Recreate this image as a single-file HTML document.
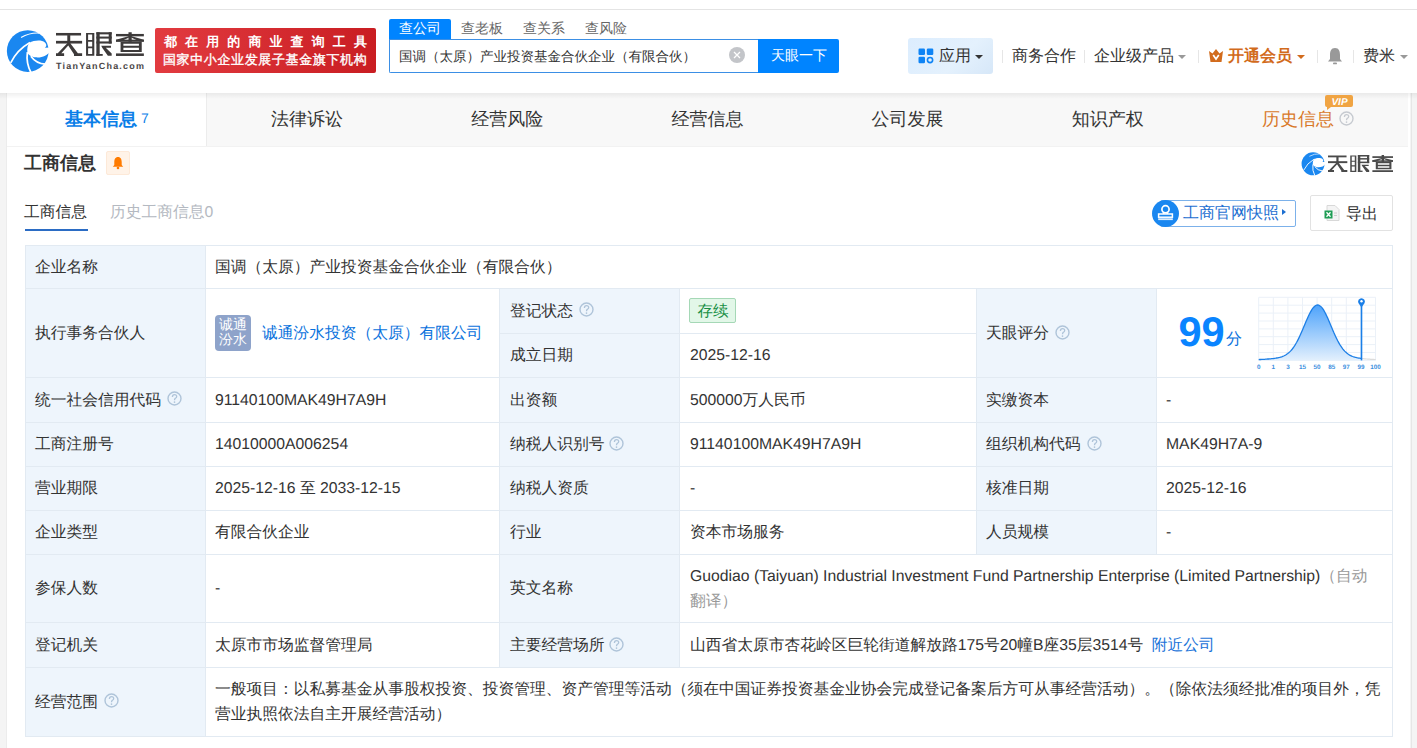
<!DOCTYPE html>
<html><head><meta charset="utf-8">
<style>
*{box-sizing:border-box;margin:0;padding:0}
html,body{width:1417px;height:748px;overflow:hidden;background:#fff}
body{font-family:"Liberation Sans",sans-serif;color:#333;position:relative;text-rendering:geometricPrecision}
.a{position:absolute;white-space:nowrap}
.t{position:absolute;white-space:nowrap;font-size:15.75px;line-height:20px;color:#333}
.hl{position:absolute;height:1px;background:#e2eaf2}
.vl{position:absolute;width:1px;background:#e2eaf2}
.lab{position:absolute;background:#eef5fc}
.caret{position:absolute;width:0;height:0;border-left:4px solid transparent;border-right:4px solid transparent;border-top:4px solid #999}
.sep{position:absolute;width:1px;height:13px;background:#e6e6e6}
</style></head><body>

<div class="a" style="left:0;top:9px;width:1417px;height:1px;background:#e4e4e4"></div>
<div class="a" style="left:0;top:93px;width:1417px;height:655px;background:#f4f4f4"></div>
<div class="a" style="left:7px;top:93px;width:1403px;height:655px;background:#fff"></div>
<div class="a" style="left:1411px;top:93px;width:1px;height:655px;background:#e6e6e6"></div>
<div class="a" style="left:6px;top:93px;width:1px;height:655px;background:#ececec"></div>
<svg class="a" style="left:4.0px;top:26.0px" width="50.0" height="50.0" viewBox="0 0 748 748">
<circle cx="355" cy="375" r="312" fill="#1a87f0"/>
<path d="M380,250 C450,212 560,200 612,245 C645,280 635,305 612,325 L700,322 L700,365 C650,445 565,478 470,468 C415,462 362,432 350,395 C343,330 355,285 380,250 Z" fill="#fff"/>
<path d="M100,552 Q190,360 388,246" fill="none" stroke="#fff" stroke-width="24"/>
<path d="M255,172 Q390,95 530,106" fill="none" stroke="#fff" stroke-width="18"/>
<path d="M350,392 Q328,560 405,700" fill="none" stroke="#fff" stroke-width="26"/>
<path d="M402,452 Q480,560 618,572" fill="none" stroke="#fff" stroke-width="26"/>
</svg>
<svg class="a" style="left:50px;top:28px" width="100" height="44" viewBox="0 0 1417 623"><g fill="#3d3a3a">
<rect x="85" y="70" width="355" height="36"/>
<rect x="85" y="182" width="370" height="38"/>
<rect x="245" y="100" width="42" height="125"/>
<path d="M245,215 L287,215 L160,358 L200,358 L200,395 L85,395 L85,358 L110,358 Z"/>
<path d="M245,225 L287,215 L395,358 L455,358 L455,395 L340,395 L340,370 Z"/>
<path d="M511,71 L628,71 L628,394 L511,394 Z M540,92 L598,92 L598,171 L540,171 Z M540,193 L598,193 L598,262 L540,262 Z M540,288 L598,288 L598,368 L540,368 Z" fill-rule="evenodd"/>
<rect x="657" y="60" width="47" height="334"/>
<rect x="657" y="60" width="217" height="30"/>
<rect x="832" y="60" width="42" height="160"/>
<rect x="657" y="121" width="217" height="29"/>
<rect x="657" y="190" width="217" height="30"/>
<path d="M726,251 L864,251 L864,278 L790,278 L874,360 L874,394 L820,394 L740,278 Z"/>
<rect x="657" y="368" width="90" height="26"/>
<rect x="935" y="84" width="395" height="34"/>
<rect x="1112" y="60" width="46" height="135"/>
<path d="M1112,118 L1158,118 L1000,192 L935,192 L935,165 Z"/>
<path d="M1158,118 L1112,118 L1270,192 L1330,192 L1330,165 Z"/>
<rect x="935" y="165" width="395" height="30"/>
<path d="M1000,195 L1300,195 L1300,340 L1000,340 Z M1040,222 L1260,222 L1260,252 L1040,252 Z M1040,280 L1260,280 L1260,310 L1040,310 Z" fill-rule="evenodd"/>
<rect x="935" y="360" width="395" height="36"/>
</g></svg>
<div class="a" style="left:56px;top:61px;font-size:9px;line-height:10px;font-weight:bold;color:#4a4646;letter-spacing:1.2px">TianYanCha.com</div>
<div class="a" style="left:155px;top:28px;width:221px;height:45px;border-radius:2px;background:linear-gradient(90deg,#e23b40,#c91d22)"></div>
<div class="a" style="left:164px;top:33px;font-size:13px;line-height:18px;color:#fff;font-weight:bold;letter-spacing:8.1px">都在用的商业查询工具</div>
<div class="a" style="left:163px;top:51px;font-size:13px;line-height:18px;color:#fff;letter-spacing:0.62px;-webkit-text-stroke:0.35px #fff">国家中小企业发展子基金旗下机构</div>
<div class="a" style="left:389px;top:19px;width:62px;height:20px;background:#0084ff;border-radius:2px 2px 0 0"></div>
<div class="a" style="left:399px;top:18px;font-size:14px;line-height:20px;color:#fff">查公司</div>
<div class="a" style="left:461px;top:18px;font-size:14px;line-height:20px;color:#666">查老板</div>
<div class="a" style="left:523px;top:18px;font-size:14px;line-height:20px;color:#666">查关系</div>
<div class="a" style="left:585px;top:18px;font-size:14px;line-height:20px;color:#666">查风险</div>
<div class="a" style="left:389px;top:39px;width:370px;height:34px;border:1px solid #3b8fe5;border-right:none;border-radius:0 0 0 2px;background:#fff"></div>
<div class="a" style="left:399px;top:47px;font-size:13.5px;line-height:20px;color:#333">国调（太原）产业投资基金合伙企业（有限合伙）</div>
<svg class="a" style="left:728.5px;top:47px" width="16" height="16" viewBox="0 0 16 16"><circle cx="8" cy="8" r="8" fill="#c3c5c9"/><path d="M5,5 L11,11 M11,5 L5,11" stroke="#fff" stroke-width="1.3"/></svg>
<div class="a" style="left:758px;top:39px;width:81px;height:34px;background:#0084ff;border-radius:0 2px 2px 0"></div>
<div class="a" style="left:771px;top:45px;font-size:14px;line-height:20px;color:#fff">天眼一下</div>
<div class="a" style="left:908px;top:38px;width:85px;height:36px;border-radius:3px;background:linear-gradient(135deg,#dcedfe,#e4f1fd 60%,#d6e7f8)"></div>
<svg class="a" style="left:918px;top:48px" width="16" height="16" viewBox="0 0 16 16"><rect x="0.5" y="0.5" width="6.5" height="6.5" rx="1.2" fill="#0f84f5"/><rect x="8.8" y="0.5" width="6.5" height="6.5" rx="1.2" fill="#0f84f5"/><rect x="0.5" y="8.8" width="6.5" height="6.5" rx="1.2" fill="#0f84f5"/><circle cx="12.05" cy="12.05" r="2.6" fill="none" stroke="#0f84f5" stroke-width="1.6"/></svg>
<div class="a" style="left:939px;top:47px;font-size:16px;line-height:20px;color:#333">应用</div>
<div class="caret" style="left:975px;top:55px;border-top-color:#333"></div>
<div class="sep" style="left:1002px;top:50px"></div>
<div class="a" style="left:1012px;top:47px;font-size:16px;line-height:20px;color:#333">商务合作</div>
<div class="sep" style="left:1084px;top:50px"></div>
<div class="a" style="left:1094px;top:47px;font-size:16px;line-height:20px;color:#333">企业级产品</div>
<div class="caret" style="left:1178px;top:55px"></div>
<div class="sep" style="left:1198px;top:50px"></div>
<svg class="a" style="left:1208px;top:48px" width="16" height="15" viewBox="0 0 16 15"><path d="M1,3 L4.5,5.5 L8,1 L11.5,5.5 L15,3 L13.5,14 L2.5,14 Z" fill="#d26b1c"/><path d="M5.2,7 L8,11 L10.8,7" fill="none" stroke="#fff" stroke-width="1.7"/></svg>
<div class="a" style="left:1228px;top:47px;font-size:16px;line-height:20px;color:#d26b1c;font-weight:bold">开通会员</div>
<div class="caret" style="left:1297px;top:55px;border-top-color:#d26b1c"></div>
<div class="sep" style="left:1317px;top:50px"></div>
<svg class="a" style="left:1327px;top:47px" width="16" height="18" viewBox="0 0 16 18"><path d="M8,1 C4,1 3,4.5 3,8 L3,12 L1,14.5 L15,14.5 L13,12 L13,8 C13,4.5 12,1 8,1 Z" fill="#999"/><rect x="6" y="15.5" width="4" height="1.8" rx="0.9" fill="#999"/></svg>
<div class="sep" style="left:1353px;top:50px"></div>
<div class="a" style="left:1363px;top:47px;font-size:16px;line-height:20px;color:#333">费米</div>
<div class="caret" style="left:1400px;top:55px"></div>
<div class="a" style="left:206px;top:93px;width:1202px;height:53px;background:#f8f8f8"></div>
<div class="a" style="left:206px;top:93px;width:1px;height:53px;background:#ececec"></div>
<div class="a" style="left:7px;top:146px;width:1401px;height:1px;background:#f2f2f2"></div>
<div class="a" style="left:0;top:93px;width:1417px;height:6px;background:linear-gradient(rgba(0,0,0,0.06),rgba(0,0,0,0))"></div>
<div class="a" style="left:65px;top:108px;font-size:18px;line-height:22px;color:#0a7ee8;font-weight:bold">基本信息</div>
<div class="a" style="left:141px;top:109px;font-size:14px;line-height:18px;color:#0a7ee8">7</div>
<div class="a" style="left:271.0px;top:108px;font-size:18px;line-height:22px;color:#333">法律诉讼</div>
<div class="a" style="left:471.2px;top:108px;font-size:18px;line-height:22px;color:#333">经营风险</div>
<div class="a" style="left:671.4px;top:108px;font-size:18px;line-height:22px;color:#333">经营信息</div>
<div class="a" style="left:871.6px;top:108px;font-size:18px;line-height:22px;color:#333">公司发展</div>
<div class="a" style="left:1071.8px;top:108px;font-size:18px;line-height:22px;color:#333">知识产权</div>
<div class="a" style="left:1262px;top:108px;font-size:18px;line-height:22px;color:#d9782a">历史信息</div>
<svg class="a" style="left:1339.0px;top:110.5px" width="15" height="15" viewBox="0 0 15 15"><circle cx="7.5" cy="7.5" r="6.5" fill="none" stroke="#c6cad0" stroke-width="1.4"/><path d="M5.4,5.9 C5.4,4.3 6.3,3.6 7.5,3.6 C8.8,3.6 9.7,4.4 9.7,5.5 C9.7,6.6 8.9,7 8.3,7.4 C7.7,7.8 7.5,8.2 7.5,9.2" fill="none" stroke="#c6cad0" stroke-width="1.3"/><circle cx="7.5" cy="11.1" r="0.85" fill="#c6cad0"/></svg>
<svg class="a" style="left:1325px;top:95px" width="28" height="16" viewBox="0 0 28 16"><path d="M2,0 L26,0 Q28,0 28,2 L28,10 Q28,12 26,12 L6,12 L2,15 L2,12 Q0,12 0,10 L0,2 Q0,0 2,0 Z" fill="#f0a443"/><text x="14.5" y="10" text-anchor="middle" font-family="Liberation Sans" font-size="10" font-weight="bold" font-style="italic" fill="#fff">VIP</text></svg>
<div class="a" style="left:24px;top:152px;font-size:18px;line-height:22px;font-weight:bold;color:#333">工商信息</div>
<div class="a" style="left:106px;top:151px;width:24px;height:24px;border-radius:2px;background:#fff3e8;border:1px solid #fde9d8"></div>
<svg class="a" style="left:111px;top:156px" width="14" height="14" viewBox="0 0 14 14"><path d="M7,1 C4.2,1 3.3,3.5 3.3,6 L3.3,9 L1.8,10.8 L12.2,10.8 L10.7,9 L10.7,6 C10.7,3.5 9.8,1 7,1 Z" fill="#ff7b00"/><circle cx="7" cy="12" r="1.3" fill="#ff7b00"/></svg>
<svg class="a" style="left:1300.0px;top:149.5px" width="27.5" height="27.5" viewBox="0 0 748 748">
<circle cx="355" cy="375" r="312" fill="#1a87f0"/>
<path d="M380,250 C450,212 560,200 612,245 C645,280 635,305 612,325 L700,322 L700,365 C650,445 565,478 470,468 C415,462 362,432 350,395 C343,330 355,285 380,250 Z" fill="#fff"/>
<path d="M100,552 Q190,360 388,246" fill="none" stroke="#fff" stroke-width="24"/>
<path d="M255,172 Q390,95 530,106" fill="none" stroke="#fff" stroke-width="18"/>
<path d="M350,392 Q328,560 405,700" fill="none" stroke="#fff" stroke-width="26"/>
<path d="M402,452 Q480,560 618,572" fill="none" stroke="#fff" stroke-width="26"/>
</svg>
<svg class="a" style="left:1328px;top:155px" width="65" height="17" viewBox="85 60 1245 335" preserveAspectRatio="none"><g fill="#4a4a4a">
<rect x="85" y="70" width="355" height="36"/>
<rect x="85" y="182" width="370" height="38"/>
<rect x="245" y="100" width="42" height="125"/>
<path d="M245,215 L287,215 L160,358 L200,358 L200,395 L85,395 L85,358 L110,358 Z"/>
<path d="M245,225 L287,215 L395,358 L455,358 L455,395 L340,395 L340,370 Z"/>
<path d="M511,71 L628,71 L628,394 L511,394 Z M540,92 L598,92 L598,171 L540,171 Z M540,193 L598,193 L598,262 L540,262 Z M540,288 L598,288 L598,368 L540,368 Z" fill-rule="evenodd"/>
<rect x="657" y="60" width="47" height="334"/>
<rect x="657" y="60" width="217" height="30"/>
<rect x="832" y="60" width="42" height="160"/>
<rect x="657" y="121" width="217" height="29"/>
<rect x="657" y="190" width="217" height="30"/>
<path d="M726,251 L864,251 L864,278 L790,278 L874,360 L874,394 L820,394 L740,278 Z"/>
<rect x="657" y="368" width="90" height="26"/>
<rect x="935" y="84" width="395" height="34"/>
<rect x="1112" y="60" width="46" height="135"/>
<path d="M1112,118 L1158,118 L1000,192 L935,192 L935,165 Z"/>
<path d="M1158,118 L1112,118 L1270,192 L1330,192 L1330,165 Z"/>
<rect x="935" y="165" width="395" height="30"/>
<path d="M1000,195 L1300,195 L1300,340 L1000,340 Z M1040,222 L1260,222 L1260,252 L1040,252 Z M1040,280 L1260,280 L1260,310 L1040,310 Z" fill-rule="evenodd"/>
<rect x="935" y="360" width="395" height="36"/>
</g></svg>
<div class="a" style="left:24px;top:203px;font-size:15.75px;line-height:20px;color:#333">工商信息</div>
<div class="a" style="left:25px;top:229px;width:63px;height:2px;background:#2b6cc4"></div>
<div class="a" style="left:110px;top:203px;font-size:15.75px;line-height:20px;color:#b4b9c1">历史工商信息0</div>
<div class="a" style="left:1160px;top:200px;width:136px;height:27px;border:1px solid #7cb1ea;border-radius:2px"></div>
<svg class="a" style="left:1152px;top:200px" width="27" height="27" viewBox="0 0 27 27"><circle cx="13.5" cy="13.5" r="13.5" fill="#1a87f0"/><circle cx="13.5" cy="9.3" r="3.6" fill="none" stroke="#fff" stroke-width="1.7"/><path d="M11.6,12.3 L11.6,14 M15.4,12.3 L15.4,14" stroke="#fff" stroke-width="1.5"/><rect x="6.6" y="14" width="13.8" height="3.2" fill="none" stroke="#fff" stroke-width="1.5"/><rect x="6.2" y="18.3" width="14.6" height="1.8" fill="#fff" opacity="0.85"/></svg>
<div class="a" style="left:1183px;top:204px;font-size:16px;line-height:20px;color:#1d6fd1">工商官网快照</div>
<div class="a" style="left:1282px;top:209px;width:0;height:0;border-top:3.5px solid transparent;border-bottom:3.5px solid transparent;border-left:4px solid #1d6fd1"></div>
<div class="a" style="left:1310px;top:195px;width:83px;height:36px;border:1px solid #e2e2e2;border-radius:2px"></div>
<svg class="a" style="left:1324px;top:205px" width="16" height="16" viewBox="0 0 16 16"><path d="M3,0.5 L11,0.5 L15,4.5 L15,15.5 L3,15.5 Z" fill="#f4f4f4" stroke="#d8d8d8"/><path d="M10,8 L13,8 M10,10.5 L13,10.5" stroke="#ccc"/><rect x="0.5" y="5.5" width="8" height="8" fill="#1f9d55"/><path d="M2.5,7.3 L6.5,11.7 M6.5,7.3 L2.5,11.7" stroke="#fff" stroke-width="1.3"/></svg>
<div class="a" style="left:1346px;top:205px;font-size:16px;line-height:20px;color:#333">导出</div>
<div class="lab" style="left:25px;top:245px;width:180px;height:491px"></div>
<div class="lab" style="left:499px;top:288px;width:180px;height:379px"></div>
<div class="lab" style="left:976px;top:288px;width:180px;height:266px"></div>
<div class="hl" style="left:25px;top:245px;width:1368px"></div>
<div class="hl" style="left:25px;top:288px;width:1368px"></div>
<div class="hl" style="left:499px;top:333px;width:478px"></div>
<div class="hl" style="left:25px;top:377px;width:1368px"></div>
<div class="hl" style="left:25px;top:422px;width:1368px"></div>
<div class="hl" style="left:25px;top:466px;width:1368px"></div>
<div class="hl" style="left:25px;top:510px;width:1368px"></div>
<div class="hl" style="left:25px;top:554px;width:1368px"></div>
<div class="hl" style="left:25px;top:622px;width:1368px"></div>
<div class="hl" style="left:25px;top:667px;width:1368px"></div>
<div class="hl" style="left:25px;top:736px;width:1368px"></div>
<div class="vl" style="left:25px;top:245px;height:492px"></div>
<div class="vl" style="left:1392px;top:245px;height:492px"></div>
<div class="vl" style="left:205px;top:245px;height:492px"></div>
<div class="vl" style="left:499px;top:288px;height:380px"></div>
<div class="vl" style="left:679px;top:288px;height:380px"></div>
<div class="vl" style="left:976px;top:288px;height:267px"></div>
<div class="vl" style="left:1156px;top:288px;height:267px"></div>
<div class="t" style="left:35.0px;top:257.5px;">企业名称</div>
<div class="t" style="left:215.0px;top:257.5px;">国调（太原）产业投资基金合伙企业（有限合伙）</div>
<div class="t" style="left:35.0px;top:323.5px;">执行事务合伙人</div>
<div class="a" style="left:215px;top:315px;width:36px;height:36px;border-radius:4px;background:#8ea3ca"></div>
<div class="a" style="left:219px;top:316.5px;font-size:14px;line-height:15px;color:#fff">诚通<br>汾水</div>
<div class="t" style="left:262.0px;top:323.5px;color:#0a72dd">诚通汾水投资（太原）有限公司</div>
<div class="t" style="left:510.0px;top:301.5px;">登记状态</div>
<svg class="a" style="left:578.5px;top:302.0px" width="15" height="15" viewBox="0 0 15 15"><circle cx="7.5" cy="7.5" r="6.5" fill="none" stroke="#afc4d9" stroke-width="1.4"/><path d="M5.4,5.9 C5.4,4.3 6.3,3.6 7.5,3.6 C8.8,3.6 9.7,4.4 9.7,5.5 C9.7,6.6 8.9,7 8.3,7.4 C7.7,7.8 7.5,8.2 7.5,9.2" fill="none" stroke="#afc4d9" stroke-width="1.3"/><circle cx="7.5" cy="11.1" r="0.85" fill="#afc4d9"/></svg>
<div class="a" style="left:689px;top:298px;width:47px;height:25px;border:1px solid #a5d8b6;background:#e2f7e8;border-radius:2px"></div>
<div class="a" style="left:697.5px;top:301.5px;font-size:15.5px;line-height:20px;color:#178f45">存续</div>
<div class="t" style="left:510.0px;top:346.0px;">成立日期</div>
<div class="t" style="left:690.0px;top:346.0px;">2025-12-16</div>
<div class="t" style="left:986.0px;top:323.5px;">天眼评分</div>
<svg class="a" style="left:1055.0px;top:324.5px" width="15" height="15" viewBox="0 0 15 15"><circle cx="7.5" cy="7.5" r="6.5" fill="none" stroke="#afc4d9" stroke-width="1.4"/><path d="M5.4,5.9 C5.4,4.3 6.3,3.6 7.5,3.6 C8.8,3.6 9.7,4.4 9.7,5.5 C9.7,6.6 8.9,7 8.3,7.4 C7.7,7.8 7.5,8.2 7.5,9.2" fill="none" stroke="#afc4d9" stroke-width="1.3"/><circle cx="7.5" cy="11.1" r="0.85" fill="#afc4d9"/></svg>
<div class="a" style="left:1178.5px;top:306.5px;font-size:41.5px;line-height:50px;font-weight:bold;color:#0a84ff">99</div>
<div class="a" style="left:1226px;top:330px;font-size:16px;line-height:20px;color:#0a72dd">分</div>
<svg class="a" style="left:1255px;top:292px" width="132" height="80" viewBox="0 0 132 80">
<defs><linearGradient id="cg" x1="0" y1="0" x2="0" y2="1"><stop offset="0" stop-color="#4ea3fb"/><stop offset="1" stop-color="#e3f0fd"/></linearGradient></defs>
<line x1="3.7" y1="5.3" x2="3.7" y2="68.4" stroke="#ebf1f8" stroke-width="1"/><line x1="18.3" y1="5.3" x2="18.3" y2="68.4" stroke="#ebf1f8" stroke-width="1"/><line x1="32.9" y1="5.3" x2="32.9" y2="68.4" stroke="#ebf1f8" stroke-width="1"/><line x1="47.5" y1="5.3" x2="47.5" y2="68.4" stroke="#ebf1f8" stroke-width="1"/><line x1="62.1" y1="5.3" x2="62.1" y2="68.4" stroke="#ebf1f8" stroke-width="1"/><line x1="76.7" y1="5.3" x2="76.7" y2="68.4" stroke="#ebf1f8" stroke-width="1"/><line x1="91.3" y1="5.3" x2="91.3" y2="68.4" stroke="#ebf1f8" stroke-width="1"/><line x1="105.9" y1="5.3" x2="105.9" y2="68.4" stroke="#ebf1f8" stroke-width="1"/><line x1="120.5" y1="5.3" x2="120.5" y2="68.4" stroke="#ebf1f8" stroke-width="1"/><line x1="3.7" y1="5.3" x2="120.7" y2="5.3" stroke="#ebf1f8" stroke-width="1"/><line x1="3.7" y1="13.2" x2="120.7" y2="13.2" stroke="#ebf1f8" stroke-width="1"/><line x1="3.7" y1="21.1" x2="120.7" y2="21.1" stroke="#ebf1f8" stroke-width="1"/><line x1="3.7" y1="29.0" x2="120.7" y2="29.0" stroke="#ebf1f8" stroke-width="1"/><line x1="3.7" y1="36.9" x2="120.7" y2="36.9" stroke="#ebf1f8" stroke-width="1"/><line x1="3.7" y1="44.7" x2="120.7" y2="44.7" stroke="#ebf1f8" stroke-width="1"/><line x1="3.7" y1="52.6" x2="120.7" y2="52.6" stroke="#ebf1f8" stroke-width="1"/><line x1="3.7" y1="60.5" x2="120.7" y2="60.5" stroke="#ebf1f8" stroke-width="1"/><line x1="3.7" y1="68.4" x2="120.7" y2="68.4" stroke="#ebf1f8" stroke-width="1"/>
<path d="M3.7,68.4 L3.7,67.6 4.7,67.5 5.7,67.5 6.7,67.4 7.7,67.4 8.7,67.3 9.7,67.3 10.7,67.2 11.7,67.1 12.7,67.0 13.7,67.0 14.7,66.9 15.7,66.8 16.7,66.7 17.7,66.6 18.7,66.5 19.7,66.3 20.7,66.2 21.7,66.0 22.7,65.8 23.7,65.6 24.7,65.4 25.7,65.1 26.7,64.8 27.7,64.4 28.7,64.0 29.7,63.5 30.7,63.0 31.7,62.3 32.7,61.6 33.7,60.8 34.7,59.9 35.7,58.9 36.7,57.8 37.7,56.5 38.7,55.2 39.7,53.7 40.7,52.0 41.7,50.3 42.7,48.4 43.7,46.4 44.7,44.3 45.7,42.1 46.7,39.8 47.7,37.5 48.7,35.1 49.7,32.7 50.7,30.3 51.7,28.0 52.7,25.7 53.7,23.5 54.7,21.5 55.7,19.6 56.7,17.9 57.7,16.4 58.7,15.2 59.7,14.2 60.7,13.5 61.7,13.1 62.7,13.0 63.7,13.2 64.7,13.7 65.7,14.4 66.7,15.4 67.7,16.7 68.7,18.2 69.7,20.0 70.7,21.9 71.7,24.0 72.7,26.1 73.7,28.4 74.7,30.8 75.7,33.2 76.7,35.6 77.7,37.9 78.7,40.3 79.7,42.5 80.7,44.7 81.7,46.8 82.7,48.8 83.7,50.6 84.7,52.4 85.7,54.0 86.7,55.4 87.7,56.8 88.7,58.0 89.7,59.1 90.7,60.1 91.7,61.0 92.7,61.8 93.7,62.5 94.7,63.1 95.7,63.6 96.7,64.1 97.7,64.5 98.7,64.8 99.7,65.2 100.7,65.4 101.7,65.7 102.7,65.9 103.7,66.1 104.7,66.2 105.7,66.4 106.7,66.5 L106.7,68.4 Z" fill="url(#cg)"/>
<polyline points="3.7,67.6 4.7,67.5 5.7,67.5 6.7,67.4 7.7,67.4 8.7,67.3 9.7,67.3 10.7,67.2 11.7,67.1 12.7,67.0 13.7,67.0 14.7,66.9 15.7,66.8 16.7,66.7 17.7,66.6 18.7,66.5 19.7,66.3 20.7,66.2 21.7,66.0 22.7,65.8 23.7,65.6 24.7,65.4 25.7,65.1 26.7,64.8 27.7,64.4 28.7,64.0 29.7,63.5 30.7,63.0 31.7,62.3 32.7,61.6 33.7,60.8 34.7,59.9 35.7,58.9 36.7,57.8 37.7,56.5 38.7,55.2 39.7,53.7 40.7,52.0 41.7,50.3 42.7,48.4 43.7,46.4 44.7,44.3 45.7,42.1 46.7,39.8 47.7,37.5 48.7,35.1 49.7,32.7 50.7,30.3 51.7,28.0 52.7,25.7 53.7,23.5 54.7,21.5 55.7,19.6 56.7,17.9 57.7,16.4 58.7,15.2 59.7,14.2 60.7,13.5 61.7,13.1 62.7,13.0 63.7,13.2 64.7,13.7 65.7,14.4 66.7,15.4 67.7,16.7 68.7,18.2 69.7,20.0 70.7,21.9 71.7,24.0 72.7,26.1 73.7,28.4 74.7,30.8 75.7,33.2 76.7,35.6 77.7,37.9 78.7,40.3 79.7,42.5 80.7,44.7 81.7,46.8 82.7,48.8 83.7,50.6 84.7,52.4 85.7,54.0 86.7,55.4 87.7,56.8 88.7,58.0 89.7,59.1 90.7,60.1 91.7,61.0 92.7,61.8 93.7,62.5 94.7,63.1 95.7,63.6 96.7,64.1 97.7,64.5 98.7,64.8 99.7,65.2 100.7,65.4 101.7,65.7 102.7,65.9 103.7,66.1 104.7,66.2 105.7,66.4 106.7,66.5" fill="none" stroke="#1d7fe6" stroke-width="1.3"/>
<polyline points="106.7,66.5 107.7,66.6 108.7,66.7 109.7,66.8 110.7,66.9 111.7,67.0 112.7,67.1 113.7,67.1 114.7,67.2 115.7,67.3 116.7,67.3 117.7,67.4 118.7,67.4 119.7,67.5 120.7,67.5" fill="none" stroke="#dcdcdc" stroke-width="1.2"/>
<line x1="106.5" y1="12" x2="106.5" y2="68.4" stroke="#1a7fe8" stroke-width="1.6"/>
<path d="M106.5,15.5 L103.4,11 A3.4,3.4 0 1 1 109.6,11 Z" fill="#1a7fe8"/>
<circle cx="106.5" cy="9.2" r="1.2" fill="#fff"/>
<g font-family="Liberation Sans" font-size="6.3" fill="#3d8fe0" font-weight="bold"><text x="3.7" y="76.6" text-anchor="middle">0</text><text x="18.3" y="76.6" text-anchor="middle">1</text><text x="32.9" y="76.6" text-anchor="middle">3</text><text x="47.5" y="76.6" text-anchor="middle">15</text><text x="62.1" y="76.6" text-anchor="middle">50</text><text x="76.7" y="76.6" text-anchor="middle">85</text><text x="91.3" y="76.6" text-anchor="middle">97</text><text x="105.9" y="76.6" text-anchor="middle">99</text><text x="120.5" y="76.6" text-anchor="middle">100</text></g>
</svg>
<div class="t" style="left:35.0px;top:390.5px;">统一社会信用代码</div>
<svg class="a" style="left:166.5px;top:391.0px" width="15" height="15" viewBox="0 0 15 15"><circle cx="7.5" cy="7.5" r="6.5" fill="none" stroke="#afc4d9" stroke-width="1.4"/><path d="M5.4,5.9 C5.4,4.3 6.3,3.6 7.5,3.6 C8.8,3.6 9.7,4.4 9.7,5.5 C9.7,6.6 8.9,7 8.3,7.4 C7.7,7.8 7.5,8.2 7.5,9.2" fill="none" stroke="#afc4d9" stroke-width="1.3"/><circle cx="7.5" cy="11.1" r="0.85" fill="#afc4d9"/></svg>
<div class="t" style="left:215.0px;top:390.5px;">91140100MAK49H7A9H</div>
<div class="t" style="left:510.0px;top:390.5px;">出资额</div>
<div class="t" style="left:690.0px;top:390.5px;">500000万人民币</div>
<div class="t" style="left:986.0px;top:390.5px;">实缴资本</div>
<div class="t" style="left:1166.0px;top:390.5px;">-</div>
<div class="t" style="left:35.0px;top:435.0px;">工商注册号</div>
<div class="t" style="left:215.0px;top:435.0px;">14010000A006254</div>
<div class="t" style="left:510.0px;top:435.0px;">纳税人识别号</div>
<svg class="a" style="left:609.0px;top:436.0px" width="15" height="15" viewBox="0 0 15 15"><circle cx="7.5" cy="7.5" r="6.5" fill="none" stroke="#afc4d9" stroke-width="1.4"/><path d="M5.4,5.9 C5.4,4.3 6.3,3.6 7.5,3.6 C8.8,3.6 9.7,4.4 9.7,5.5 C9.7,6.6 8.9,7 8.3,7.4 C7.7,7.8 7.5,8.2 7.5,9.2" fill="none" stroke="#afc4d9" stroke-width="1.3"/><circle cx="7.5" cy="11.1" r="0.85" fill="#afc4d9"/></svg>
<div class="t" style="left:690.0px;top:435.0px;">91140100MAK49H7A9H</div>
<div class="t" style="left:986.0px;top:435.0px;">组织机构代码</div>
<svg class="a" style="left:1087.0px;top:436.0px" width="15" height="15" viewBox="0 0 15 15"><circle cx="7.5" cy="7.5" r="6.5" fill="none" stroke="#afc4d9" stroke-width="1.4"/><path d="M5.4,5.9 C5.4,4.3 6.3,3.6 7.5,3.6 C8.8,3.6 9.7,4.4 9.7,5.5 C9.7,6.6 8.9,7 8.3,7.4 C7.7,7.8 7.5,8.2 7.5,9.2" fill="none" stroke="#afc4d9" stroke-width="1.3"/><circle cx="7.5" cy="11.1" r="0.85" fill="#afc4d9"/></svg>
<div class="t" style="left:1166.0px;top:435.0px;">MAK49H7A-9</div>
<div class="t" style="left:35.0px;top:479.0px;">营业期限</div>
<div class="t" style="left:215.0px;top:479.0px;">2025-12-16 至 2033-12-15</div>
<div class="t" style="left:510.0px;top:479.0px;">纳税人资质</div>
<div class="t" style="left:690.0px;top:479.0px;">-</div>
<div class="t" style="left:986.0px;top:479.0px;">核准日期</div>
<div class="t" style="left:1166.0px;top:479.0px;">2025-12-16</div>
<div class="t" style="left:35.0px;top:523.0px;">企业类型</div>
<div class="t" style="left:215.0px;top:523.0px;">有限合伙企业</div>
<div class="t" style="left:510.0px;top:523.0px;">行业</div>
<div class="t" style="left:690.0px;top:523.0px;">资本市场服务</div>
<div class="t" style="left:986.0px;top:523.0px;">人员规模</div>
<div class="t" style="left:1166.0px;top:523.0px;">-</div>
<div class="t" style="left:35.0px;top:579.0px;">参保人数</div>
<div class="t" style="left:215.0px;top:579.0px;">-</div>
<div class="t" style="left:510.0px;top:579.0px;">英文名称</div>
<div class="t" style="left:690px;top:564px;line-height:25px">Guodiao (Taiyuan) Industrial Investment Fund Partnership Enterprise (Limited Partnership) <span style="color:#999;margin-left:-4.4px">（自动<br>翻译）</span></div>
<div class="t" style="left:35.0px;top:635.5px;">登记机关</div>
<div class="t" style="left:215.0px;top:635.5px;">太原市市场监督管理局</div>
<div class="t" style="left:510.0px;top:635.5px;">主要经营场所</div>
<svg class="a" style="left:609.0px;top:636.5px" width="15" height="15" viewBox="0 0 15 15"><circle cx="7.5" cy="7.5" r="6.5" fill="none" stroke="#afc4d9" stroke-width="1.4"/><path d="M5.4,5.9 C5.4,4.3 6.3,3.6 7.5,3.6 C8.8,3.6 9.7,4.4 9.7,5.5 C9.7,6.6 8.9,7 8.3,7.4 C7.7,7.8 7.5,8.2 7.5,9.2" fill="none" stroke="#afc4d9" stroke-width="1.3"/><circle cx="7.5" cy="11.1" r="0.85" fill="#afc4d9"/></svg>
<div class="t" style="left:690.0px;top:635.5px;">山西省太原市杏花岭区巨轮街道解放路175号20幢B座35层3514号 <span style="color:#1a73d9;margin-left:4px">附近公司</span></div>
<div class="t" style="left:35.0px;top:692.5px;">经营范围</div>
<svg class="a" style="left:104.0px;top:693.0px" width="15" height="15" viewBox="0 0 15 15"><circle cx="7.5" cy="7.5" r="6.5" fill="none" stroke="#afc4d9" stroke-width="1.4"/><path d="M5.4,5.9 C5.4,4.3 6.3,3.6 7.5,3.6 C8.8,3.6 9.7,4.4 9.7,5.5 C9.7,6.6 8.9,7 8.3,7.4 C7.7,7.8 7.5,8.2 7.5,9.2" fill="none" stroke="#afc4d9" stroke-width="1.3"/><circle cx="7.5" cy="11.1" r="0.85" fill="#afc4d9"/></svg>
<div class="t" style="left:215px;top:677px;line-height:25px">一般项目：以私募基金从事股权投资、投资管理、资产管理等活动（须在中国证券投资基金业协会完成登记备案后方可从事经营活动）。（除依法须经批准的项目外，凭<br>营业执照依法自主开展经营活动）</div>
</body></html>
